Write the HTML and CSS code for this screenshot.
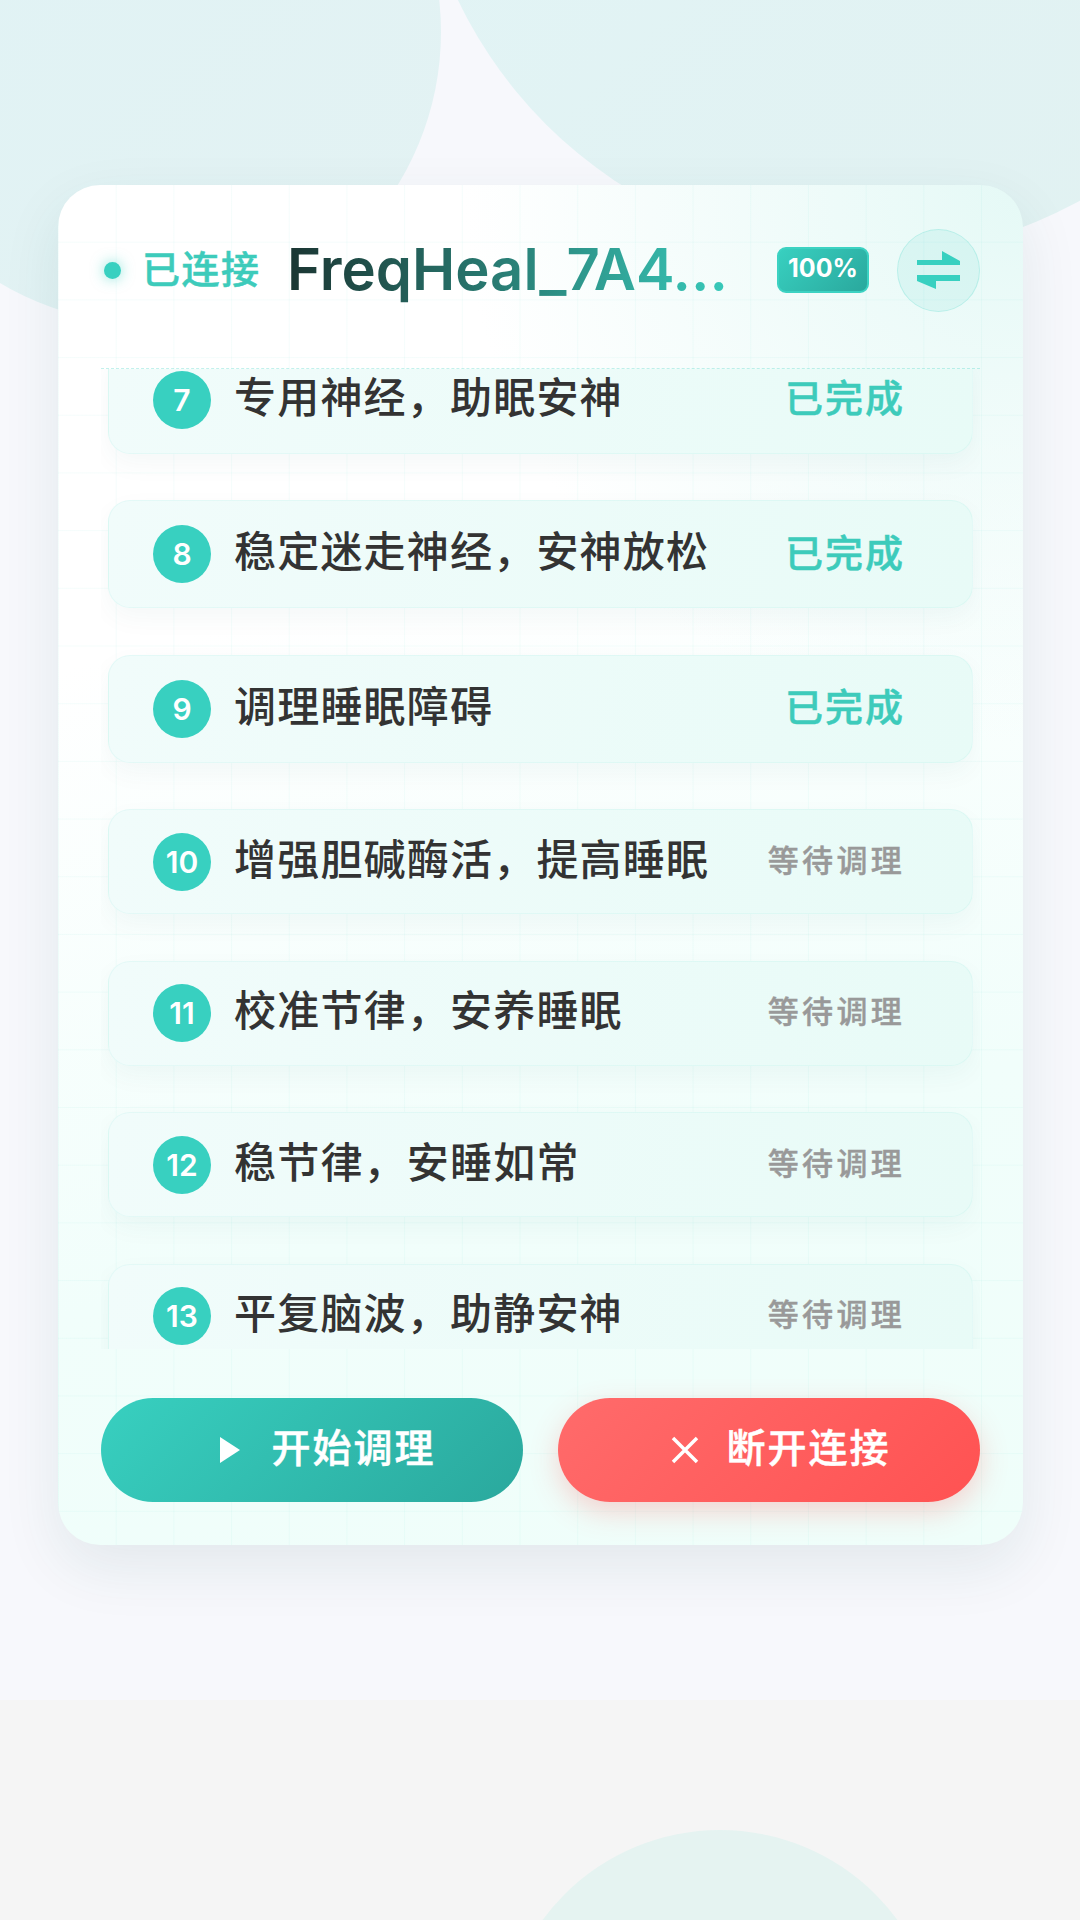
FILE: index.html
```html
<!DOCTYPE html>
<html lang="zh-CN">
<head>
    <meta charset="UTF-8">
    <meta name="viewport" content="width=device-width, initial-scale=1.0">
    <title>FreqHeal</title>
    <link rel="stylesheet" href="styles.css">
</head>
<body>
    <div class="page">
        <div class="page-top">
            <div class="blob blob-left"></div>
            <div class="blob blob-right"></div>

            <div class="panel">
                <div class="panel-head">
                    <span class="status-dot"></span>
                    <span class="status-text">已连接</span>
                    <span class="device-name">FreqHeal_7A4...</span>
                    <span class="battery">100%</span>
                    <button class="switch-button" aria-label="切换设备">
                        <svg class="switch-icon" viewBox="0 0 43 38">
                            <path d="M25 0L43 10V14H0V9H25z"/>
                            <path d="M0 24H43V30H19V38L0 30z"/>
                        </svg>
                    </button>
                </div>

                <div class="step-window">
                    <div class="step-list">
                        <div class="step step-done">
                            <span class="step-num">7</span>
                            <span class="step-title">专用神经，助眠安神</span>
                            <span class="step-state">已完成</span>
                        </div>
                        <div class="step step-done">
                            <span class="step-num">8</span>
                            <span class="step-title">稳定迷走神经，安神放松</span>
                            <span class="step-state">已完成</span>
                        </div>
                        <div class="step step-done">
                            <span class="step-num">9</span>
                            <span class="step-title">调理睡眠障碍</span>
                            <span class="step-state">已完成</span>
                        </div>
                        <div class="step">
                            <span class="step-num">10</span>
                            <span class="step-title">增强胆碱酶活，提高睡眠</span>
                            <span class="step-state">等待调理</span>
                        </div>
                        <div class="step">
                            <span class="step-num">11</span>
                            <span class="step-title">校准节律，安养睡眠</span>
                            <span class="step-state">等待调理</span>
                        </div>
                        <div class="step">
                            <span class="step-num">12</span>
                            <span class="step-title">稳节律，安睡如常</span>
                            <span class="step-state">等待调理</span>
                        </div>
                        <div class="step">
                            <span class="step-num">13</span>
                            <span class="step-title">平复脑波，助静安神</span>
                            <span class="step-state">等待调理</span>
                        </div>
                    </div>
                </div>

                <div class="panel-actions">
                    <button class="action action-start">
                        <svg class="action-icon" viewBox="0 0 28 28"><path d="M4 1l20 13L4 27z"/></svg>
                        <span class="action-label">开始调理</span>
                    </button>
                    <button class="action action-stop">
                        <svg class="action-icon" viewBox="0 0 28 28"><path class="cross" d="M2 2l24 24M26 2L2 26"/></svg>
                        <span class="action-label">断开连接</span>
                    </button>
                </div>
            </div>
        </div>

        <div class="blob blob-bottom"></div>
    </div>
</body>
</html>
```

FILE: styles.css
```css
* {
    box-sizing: border-box;
}

body {
    margin: 0;
    font-family: "Noto Sans CJK SC", "Noto Sans", sans-serif;
    background-color: #f5f5f5;
    color: #333;
}

.page {
    position: relative;
    height: 1920px;
    overflow: hidden;
}

.page-top {
    position: relative;
    height: 1700px;
    padding: 185px 57px 0 58px;
    background-color: #f7f8fc;
}

/* Soft circles behind the panel */
.blob {
    position: absolute;
    border-radius: 50%;
}

.blob-left {
    left: -143px;
    top: -260px;
    width: 584px;
    height: 584px;
    background: linear-gradient(135deg, #e0f3f5, #e3f2f3);
}

.blob-right {
    left: 414px;
    top: -644px;
    width: 900px;
    height: 900px;
    background: linear-gradient(135deg, #e2f5f7, #e1f1f1);
}

.blob-bottom {
    left: 500px;
    top: 1830px;
    width: 440px;
    height: 440px;
    background-color: #e5f3f1;
}

.panel {
    position: relative;
    height: 1360px;
    padding: 0 43px;
    border-radius: 42px;
    background-color: #f1fefb;
    background-image:
        linear-gradient(rgba(56, 208, 192, 0.05) 1px, transparent 1px),
        linear-gradient(90deg, rgba(56, 208, 192, 0.05) 1px, transparent 1px),
        radial-gradient(circle at 100% 0, #e5f9f6 0, rgba(229, 249, 246, 0) 560px),
        linear-gradient(165deg, #fff 0%, #fff 30%, #f1fefb 70%, #effefa 100%);
    background-size: 57.7px 57.7px, 57.7px 57.7px, 100% 100%, 100% 100%;
    background-position: 0 -1px, 0 0, 0 0, 0 0;
    box-shadow: 0 22px 60px rgba(20, 80, 80, 0.09);
}

.panel-head {
    display: flex;
    align-items: center;
    height: 184px;
    padding: 0 0 13px 3px;
    border-bottom: 1px dashed rgba(56, 208, 192, 0.3);
}

.status-dot {
    width: 17px;
    height: 17px;
    margin-right: 21px;
    border-radius: 50%;
    background-color: #38d0c0;
    box-shadow: 0 0 14px rgba(56, 208, 192, 0.6);
}

.status-text {
    width: 145px;
    margin-top: -8px;
    font-size: 38px;
    font-weight: 500;
    letter-spacing: 1.500px;
    color: #3dcbbb;
    -webkit-text-stroke: 0.5px #3dcbbb;
}

.device-name {
    flex: 1;
    margin-top: -1px;
    font-family: Inter, sans-serif;
    font-size: 58px;
    font-weight: 600;
    line-height: 1.2;
    white-space: nowrap;
    background: linear-gradient(90deg, #1b3532, #38c9ba);
    background-size: 440px 100%;
    background-repeat: no-repeat;
    -webkit-background-clip: text;
    background-clip: text;
    color: transparent;
}

.battery {
    width: 92px;
    height: 46px;
    margin-right: 28px;
    border: 2px solid #3cd2c2;
    border-radius: 9px;
    background: linear-gradient(135deg, #38d0c0, #2aa89d);
    color: #fff;
    font-family: Inter, sans-serif;
    font-size: 25px;
    font-weight: 700;
    line-height: 39px;
    text-align: center;
}

.switch-button {
    display: flex;
    align-items: center;
    justify-content: center;
    width: 83px;
    height: 83px;
    padding: 0;
    border: 1px solid rgba(56, 208, 192, 0.2);
    border-radius: 50%;
    background-color: rgba(56, 208, 192, 0.1);
}

.switch-icon {
    width: 43px;
    height: 38px;
    fill: #38d0c0;
}

/* Scrolled list: the first row is cut off by the header */
.step-window {
    height: 980px;
    padding: 0 7px;
    overflow: hidden;
}

.step-list {
    display: flex;
    flex-direction: column;
    gap: 46.5px;
    margin-top: -23.5px;
}

.step {
    display: flex;
    flex-shrink: 0;
    align-items: center;
    height: 105px;
    padding: 0 67px 0 44px;
    border: 1px solid rgba(56, 208, 192, 0.07);
    border-radius: 22px;
    background: linear-gradient(100deg, #f1fcfb, #e8fbf7);
    box-shadow: 0 10px 26px rgba(30, 90, 90, 0.045);
}

.step-done {
    height: 108px;
}

.step-num {
    flex-shrink: 0;
    width: 58px;
    height: 58px;
    margin-right: 23px;
    border-radius: 50%;
    background-color: #38d0c0;
    color: #fff;
    font-family: Inter, sans-serif;
    font-size: 30px;
    font-weight: 600;
    line-height: 58px;
    text-align: center;
}

.step-title {
    flex: 1;
    margin-top: -9px;
    font-size: 42px;
    font-weight: 500;
    line-height: 1.1;
    letter-spacing: 1.200px;
    color: #333;
    white-space: nowrap;
}

.step-state {
    margin-top: -5px;
    font-size: 31px;
    font-weight: 500;
    line-height: 1.1;
    letter-spacing: 3.300px;
    color: #999;
    -webkit-text-stroke: 0.4px #999;
}

.step-done .step-state {
    margin-top: -7px;
    font-size: 38px;
    letter-spacing: 2px;
    color: #3dcbbb;
    -webkit-text-stroke: 0.5px #3dcbbb;
}

.panel-actions {
    display: flex;
    justify-content: space-between;
    margin-top: 49px;
}

.action {
    display: flex;
    align-items: center;
    justify-content: center;
    gap: 27px;
    width: 422px;
    height: 104px;
    padding: 0 0 0 28px;
    border: none;
    border-radius: 52px;
    color: #fff;
    font-family: inherit;
    font-size: 39px;
    font-weight: 500;
    letter-spacing: 2px;
    -webkit-text-stroke: 0.5px #fff;
}

.action-label {
    margin-top: -11px;
}

.action-start {
    background: linear-gradient(135deg, #38d0c0, #2aa89d);
}

.action-stop {
    padding-left: 24px;
    background: linear-gradient(135deg, #ff6b6b, #ff5252);
    box-shadow: 0 10px 28px rgba(255, 82, 82, 0.25);
}

.action-icon {
    width: 28px;
    height: 28px;
    fill: #fff;
}

.cross {
    fill: none;
    stroke: #fff;
    stroke-width: 3.500;
}
```
